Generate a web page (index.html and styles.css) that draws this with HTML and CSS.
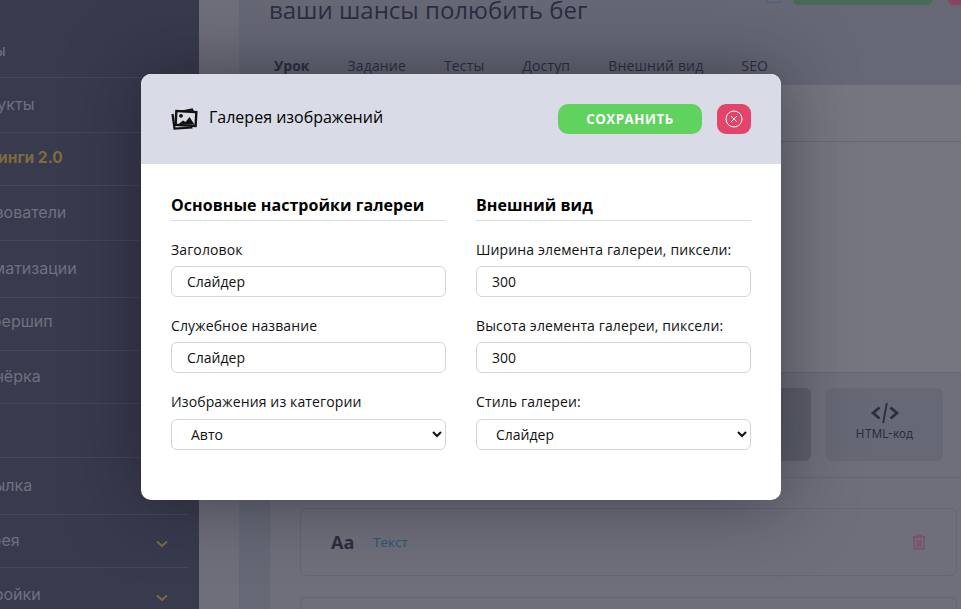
FILE: index.html
```html
<!DOCTYPE html>
<html lang="ru">
<head>
<meta charset="utf-8">
<title>Галерея изображений</title>
<link rel="stylesheet" href="styles.css">
</head>
<body>
<div class="page">
  <aside class="sidebar">
    <nav class="nav">
      <div class="nav-item h77">Курсы</div>
      <div class="nav-item h55">Продукты</div>
      <div class="nav-item h53 gold">Тренинги 2.0</div>
      <div class="nav-item h55">Пользователи</div>
      <div class="nav-item h57">Автоматизации</div>
      <div class="nav-item h53 up">Мембершип</div>
      <div class="nav-item h53">Партнёрка</div>
      <div class="nav-item h54">Блог</div>
      <div class="nav-item h57">Рассылка</div>
      <div class="nav-item h53">Галерея
        <svg class="chev" viewBox="0 0 12 8"><path d="M1 1.500l5 4.500 5-4.500" fill="none" stroke="#7d6c3f" stroke-width="2"/></svg>
      </div>
      <div class="nav-item h53 last">Настройки
        <svg class="chev" viewBox="0 0 12 8"><path d="M1 1.500l5 4.500 5-4.500" fill="none" stroke="#7d6c3f" stroke-width="2"/></svg>
      </div>
    </nav>
  </aside>
  <main class="main">
    <div class="content">
      <div class="head">
        <h1 class="title">ваши шансы полюбить бег</h1>
        <div class="head-actions">
          <span class="mini-icon"></span>
          <span class="mini-green"></span>
          <span class="mini-pink"></span>
        </div>
      </div>
      <div class="tabs">
        <span class="tab active">Урок</span>
        <span class="tab">Задание</span>
        <span class="tab">Тесты</span>
        <span class="tab">Доступ</span>
        <span class="tab">Внешний вид</span>
        <span class="tab">SEO</span>
      </div>
      <div class="panel">
        <div class="panel-top">
          <div class="panel-bar"></div>
        </div>
        <div class="tiles">
          <div class="tile"></div>
          <div class="tile">
            <svg class="code" viewBox="0 0 32 24"><path d="M10 6L3 12l7 6M22 6l7 6-7 6" fill="none" stroke="#2b2e41" stroke-width="3"/><path d="M18 1l-4 22" stroke="#2b2e41" stroke-width="2" fill="none"/></svg>
            <span>HTML-код</span>
          </div>
        </div>
        <div class="block">
          <span class="aa">Aa</span>
          <span class="block-link">Текст</span>
          <svg class="trash" viewBox="0 0 14 16"><path d="M.5 3h13M5 3V1h4v2M2 3v12h10V3M5 5.500v8M7 5.500v8M9 5.500v8" fill="none" stroke="#84415f" stroke-width="1"/></svg>
        </div>
        <div class="block"></div>
      </div>
    </div>
  </main>
</div>

<section class="modal">
  <header class="modal-head">
    <svg class="gallery" viewBox="0 0 27 22">
      <path d="M6 4.500L21 1.500l1.500 3" fill="none" stroke="#111" stroke-width="2.200"/>
      <path d="M1.500 6l2 14.500 18-1" fill="none" stroke="#111" stroke-width="2.200"/>
      <rect x="5" y="3.500" width="20" height="14" fill="#d9dbe7" stroke="#111" stroke-width="2.400" transform="rotate(3 15 10)"/>
      <circle cx="10" cy="7.800" r="1.900" fill="#111"/>
      <path d="M7 16.500l5-4 2.500 1.500 4-5 5 7.500z" fill="#111"/>
    </svg>
    <span class="modal-title">Галерея изображений</span>
    <button class="save">СОХРАНИТЬ</button>
    <button class="close" aria-label="Закрыть">
      <svg viewBox="0 0 18 18"><circle cx="9" cy="9" r="8" fill="none" stroke="#fff" stroke-width="1"/><path d="M6 6l6 6M12 6l-6 6" stroke="#fff" stroke-width="1" fill="none"/></svg>
    </button>
  </header>
  <div class="modal-body">
    <div class="col">
      <h2 class="col-title">Основные настройки галереи</h2>
      <label class="field">
        <span class="label">Заголовок</span>
        <input class="control" value="Слайдер">
      </label>
      <label class="field">
        <span class="label">Служебное название</span>
        <input class="control" value="Слайдер">
      </label>
      <label class="field">
        <span class="label label-select">Изображения из категории</span>
        <select class="control select"><option>Авто</option></select>
      </label>
    </div>
    <div class="col">
      <h2 class="col-title">Внешний вид</h2>
      <label class="field">
        <span class="label">Ширина элемента галереи, пиксели:</span>
        <input class="control" value="300">
      </label>
      <label class="field">
        <span class="label">Высота элемента галереи, пиксели:</span>
        <input class="control" value="300">
      </label>
      <label class="field">
        <span class="label label-select">Стиль галереи:</span>
        <select class="control select"><option>Слайдер</option></select>
      </label>
    </div>
  </div>
</section>
</body>
</html>
```
FILE: styles.css
```css
* { box-sizing: border-box; }
html, body { margin: 0; height: 100%; overflow: hidden; }
body { font-family: "Open Sans", sans-serif; background: #6e6f7b; }

.page { display: flex; height: 609px; overflow: hidden; }

.sidebar { width: 199px; flex: none; background: #383a4e; overflow: hidden; }
.nav { width: 233px; margin-left: -44px; }
.nav-item {
  display: flex; align-items: center; justify-content: space-between;
  padding-right: 20px; padding-bottom: 2px;
  font-family: Inter, sans-serif; font-size: 16px; color: #6f717f;
  border-bottom: 1px solid #45475b;
}
.nav-item.last { border-bottom: 0; }
.h77 { height: 78px; padding-top: 22px; padding-bottom: 0; }
.h55 { height: 55px; }
.h53 { height: 53px; }
.h57 { height: 57px; }
.h54 { height: 54px; }
.up { padding-bottom: 6px; }
.gold { color: #7d6c3f; font-weight: 700; font-size: 15.500px; padding-bottom: 4px; padding-left: 4px; }
.chev { width: 12px; height: 8px; margin-top: 8px; margin-right: 1px; }

.main { flex: 1; min-width: 0; padding-left: 40px; overflow: hidden; }
.content { background: #666876; height: 100%; }
.head { height: 48px; display: flex; justify-content: space-between; padding-left: 30px; }
.title { margin: -7px 0 0; font-size: 24px; line-height: 34px; font-weight: 400; color: #2b2e41; }
.head-actions { display: flex; height: 5px; }
.mini-icon { width: 14px; height: 3px; border: 1px solid #41668c; border-top: 0; border-radius: 0 0 2px 2px; margin-right: 12px; }
.mini-green { width: 139px; height: 5px; background: #466b58; border-radius: 0 0 8px 8px; margin-right: 16px; }
.mini-pink { width: 13px; height: 5px; background: #8b4360; border-radius: 0 0 0 8px; }

.tabs { display: flex; height: 37px; padding: 8px 0 0 35px; font-size: 14px; line-height: 19px; letter-spacing: .15px; color: #2b2e41; }
.tab { margin-right: 38px; }
.tab.active { font-weight: 700; letter-spacing: 0; }

.panel { margin-left: 30px; height: 525px; background: #6e6f7b; border-left: 1px solid #63656f; }
.panel-top { height: 288px; border-bottom: 1px solid #63657a; background: #757680; }
.panel-bar { height: 57px; border-bottom: 1px solid #666878; }
.tiles { display: flex; justify-content: flex-end; gap: 15px; padding-right: 18px; padding-top: 15px; height: 105px; border-bottom: 1px solid #63657a; }
.tile { width: 117px; height: 73px; background: #666875; border-radius: 6px; display: flex; flex-direction: column; align-items: center; gap: 3px; padding-top: 14px; font-family: Inter, sans-serif; font-size: 11.500px; color: #2b2e41; }
.tile:first-child { background: #5d5f6c; }
.code { width: 32px; height: 22px; }

.block { margin: 30px 4px 0 30px; height: 68px; border: 1px solid #63657a; border-radius: 6px; display: flex; align-items: center; padding: 0 30px 0 30px; }
.block + .block { margin-top: 21px; }
.aa { font-weight: 700; font-size: 18px; color: #2b2e41; width: 42px; }
.block-link { flex: 1; font-size: 13.500px; color: #32536f; }
.trash { width: 14px; height: 16px; }

.modal {
  position: absolute; left: 141px; top: 74px; width: 640px; height: 426px;
  background: #fff; border-radius: 10px; overflow: hidden;
  box-shadow: 0 0 70px rgba(20, 20, 30, .5);
}
.modal-head { height: 90px; background: #d9dbe7; display: flex; align-items: center; padding: 0 30px; }
.gallery { width: 27px; height: 22px; margin-right: 11px; flex: none; }
.modal-title { flex: 1; font-size: 16px; color: #000; margin-top: -4px; }
.save {
  width: 144px; height: 30px; border: 0; border-radius: 10px; background: #5fd35e; color: #fff;
  font: 700 13.300px "Open Sans", sans-serif; letter-spacing: .55px; padding: 0;
}
.close { width: 34px; height: 30px; margin-left: 15px; border: 0; border-radius: 9px; background: #e4446a; padding: 0; display: flex; align-items: center; justify-content: center; }
.close svg { width: 18px; height: 18px; }

.modal-body { display: flex; gap: 30px; padding: 30px 30px 0; }
.col { flex: 1; min-width: 0; }
.col-title { margin: 0 0 19px; padding-bottom: 4px; height: 27px; font-size: 16px; line-height: 22px; font-weight: 700; color: #000; letter-spacing: .05px; border-bottom: 1px solid #d9dbe7; }
.field { display: block; margin-bottom: 19px; }
.label { display: block; font-size: 14px; line-height: 19px; letter-spacing: .13px; margin-bottom: 7px; color: #111; }
.label-select { margin-bottom: 8px; }
.control {
  display: block; width: 100%; height: 31px; border: 1px solid #d5d5d5; border-radius: 6px;
  padding: 0 15px; background: #fff; color: #111; font: 14px "Open Sans", sans-serif; outline: 0;
}
.select { padding: 0 11px 0 15px; }
```
